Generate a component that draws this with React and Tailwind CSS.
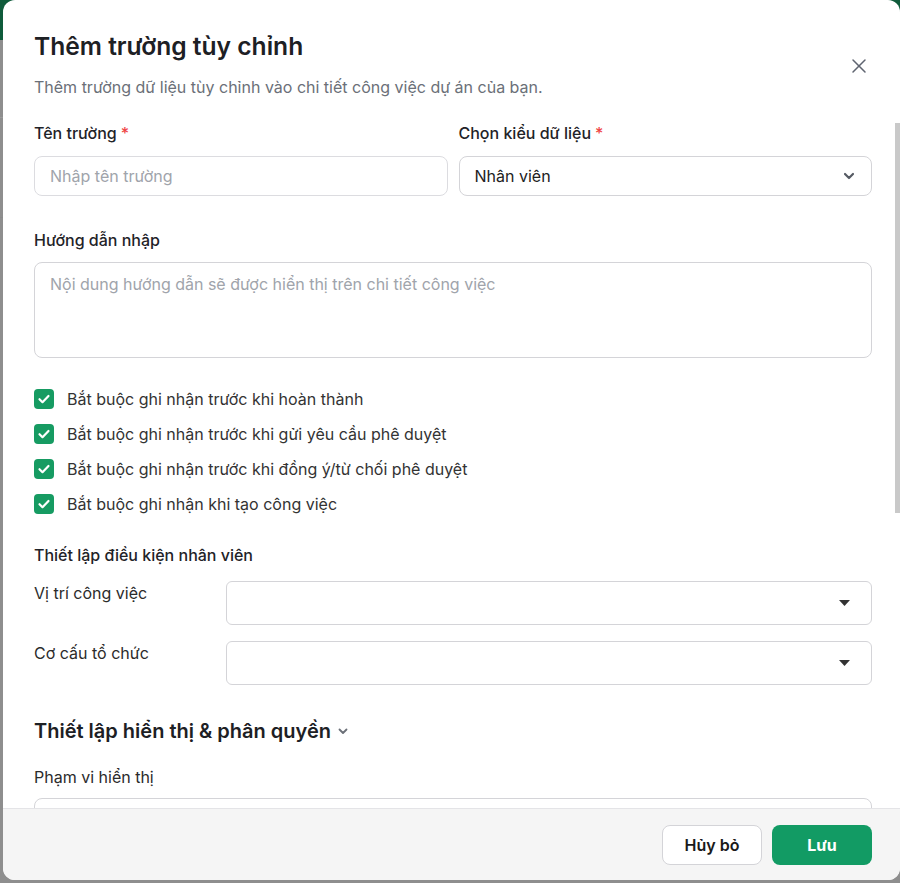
import { X } from "lucide-react";

const checks = [
  "Bắt buộc ghi nhận trước khi hoàn thành",
  "Bắt buộc ghi nhận trước khi gửi yêu cầu phê duyệt",
  "Bắt buộc ghi nhận trước khi đồng ý/từ chối phê duyệt",
  "Bắt buộc ghi nhận khi tạo công việc",
];

function Required() {
  return <span className="text-[#ef4444] ml-1">*</span>;
}

function CheckBox() {
  return (
    <span className="w-5 h-5 rounded-[4px] bg-[#169b62] flex items-center justify-center shrink-0">
      <svg width="14" height="14" viewBox="0 0 14 14" fill="none">
        <path d="M2.5 7.2l3 3L11.5 4" stroke="white" strokeWidth="2.2" strokeLinecap="round" strokeLinejoin="round" />
      </svg>
    </span>
  );
}

function Caret() {
  return (
    <svg width="11" height="6" viewBox="0 0 11 6">
      <path d="M0 0h11L5.5 6z" fill="#333" />
    </svg>
  );
}

function SelectRow({ label }) {
  return (
    <div className="flex items-start">
      <span className="w-[192px] shrink-0 leading-6 text-[#2b2b2b]">{label}</span>
      <div className="flex-1 h-[44px] rounded-md border border-[#d4d4d8] flex items-center justify-end pr-[21px]">
        <Caret />
      </div>
    </div>
  );
}

export default function App() {
  return (
    <div className="relative w-[900px] h-[883px] overflow-hidden bg-[#8e8e8e] font-['Inter',sans-serif]">
      {/* page behind the overlay */}
      <div className="h-[40px] bg-[#0f5b3b]" />
      <div className="border-b border-[#9a9a9a] h-[78px]" />
      <div className="border-b border-[#8a8a8a] h-[100px]" />

      <div className="absolute left-[3px] top-0 w-[897px] h-[880px] bg-white rounded-xl flex flex-col overflow-hidden">
        <div className="relative pl-[31px] pr-[28px] pt-[30px] pb-[10px]">
          <h2 className="text-[24.6px] leading-8 font-semibold text-[#1d2024]">Thêm trường tùy chỉnh</h2>
          <p className="mt-[13px] text-[16px] leading-6 text-[#6b7078]">
            Thêm trường dữ liệu tùy chỉnh vào chi tiết công việc dự án của bạn.
          </p>
          <button className="absolute right-[29px] top-[54px] text-[#5f6470]">
            <X size={24} strokeWidth={1.5} />
          </button>
        </div>

        <div className="relative flex-1 overflow-hidden pl-[31px] pr-[28px] pt-[12px] text-[16px]">
          <div className="grid grid-cols-2 gap-x-[11px]">
            <div>
              <div className="leading-6 font-medium text-[#1f2328]">
                Tên trường
                <Required />
              </div>
              <div className="mt-[11px] h-[40px] rounded-lg border border-[#dcdce0] flex items-center px-[15px] text-[#a0a4ab]">
                Nhập tên trường
              </div>
            </div>
            <div>
              <div className="leading-6 font-medium text-[#1f2328]">
                Chọn kiểu dữ liệu
                <Required />
              </div>
              <div className="mt-[11px] h-[40px] rounded-lg border border-[#d4d4d8] flex items-center justify-between pl-[15px] pr-[16px] text-[#222]">
                <span>Nhân viên</span>
                <svg width="12" height="8" viewBox="0 0 12 8" fill="none">
                  <path d="M2 2l4 4 4-4" stroke="#555a63" strokeWidth="2.2" strokeLinecap="round" strokeLinejoin="round" />
                </svg>
              </div>
            </div>
          </div>

          <div className="mt-[32px] leading-6 font-medium text-[#1f2328]">Hướng dẫn nhập</div>
          <div className="mt-[10px] h-[96px] rounded-lg border border-[#d4d4d8] px-[15px] pt-[9px] leading-6 text-[#a0a4ab]">
            Nội dung hướng dẫn sẽ được hiển thị trên chi tiết công việc
          </div>

          <div className="mt-[29px] flex flex-col gap-[11px]">
            {checks.map((c) => (
              <label key={c} className="flex items-center gap-[13px] leading-6 text-[#333]">
                <CheckBox />
                <span>{c}</span>
              </label>
            ))}
          </div>

          <div className="mt-[27px] leading-6 font-medium text-[#1f2328]">Thiết lập điều kiện nhân viên</div>
          <div className="mt-[14px] flex flex-col gap-[16px]">
            <SelectRow label="Vị trí công việc" />
            <SelectRow label="Cơ cấu tổ chức" />
          </div>

          <div className="mt-[32px] flex items-center gap-[7px]">
            <span className="text-[20px] leading-7 font-semibold text-[#1d2024]">Thiết lập hiển thị &amp; phân quyền</span>
            <svg width="10" height="7" viewBox="0 0 10 7" fill="none">
              <path d="M1.5 1.5L5 5l3.5-3.5" stroke="#6b7078" strokeWidth="1.8" strokeLinecap="round" strokeLinejoin="round" />
            </svg>
          </div>
          <div className="mt-[20px] leading-6 text-[#2b2b2b]">Phạm vi hiển thị</div>
          <div className="mt-[9px] h-[40px] rounded-lg border border-[#d4d4d8]" />

          {/* scroll thumb */}
          <div className="absolute right-0 top-[14px] w-[5px] h-[390px] bg-[#c9c9c9]" />
        </div>

        <div className="h-[72px] shrink-0 border-t border-[#e4e4e7] bg-[#f5f5f5] flex items-start justify-end gap-[10px] pt-[16px] pr-[28px]">
          <button className="w-[100px] h-[40px] rounded-lg border border-[#d4d4d8] bg-white text-[16px] font-semibold text-[#1a1a1a]">
            Hủy bỏ
          </button>
          <button className="w-[100px] h-[40px] rounded-lg bg-[#129b64] text-[16px] font-bold text-white">
            Lưu
          </button>
        </div>
      </div>
    </div>
  );
}
